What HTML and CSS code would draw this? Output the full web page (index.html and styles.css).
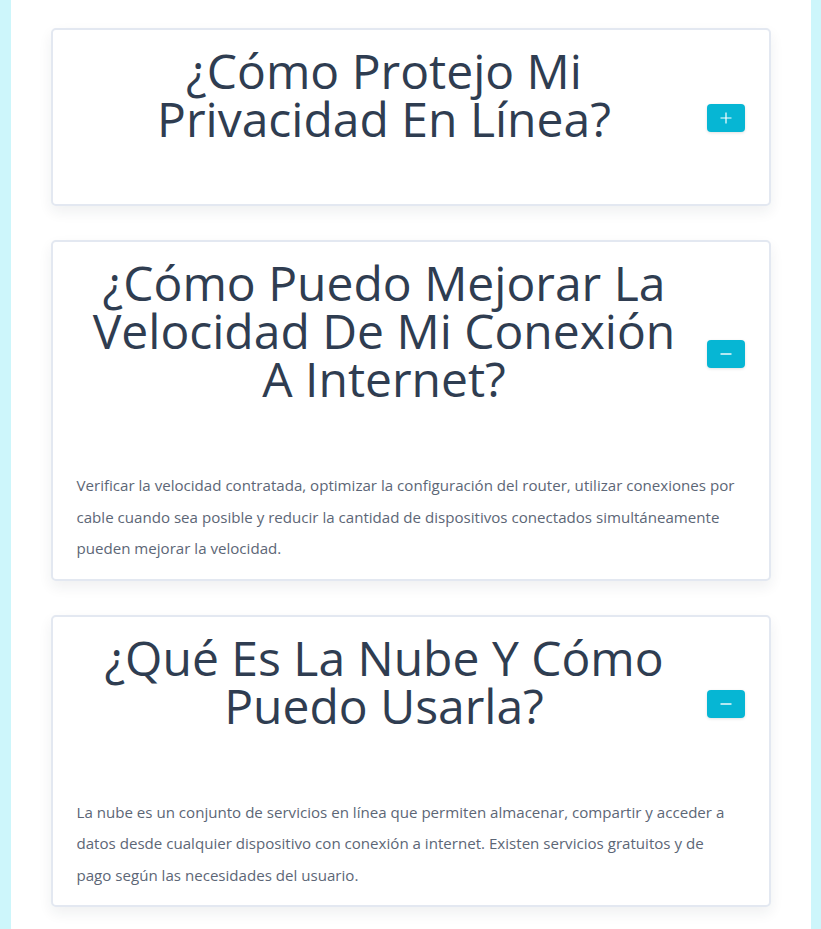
FILE: index.html
```html
<!DOCTYPE html>
<html lang="es">
<head>
<meta charset="utf-8">
<title>Preguntas frecuentes</title>
<link rel="stylesheet" href="styles.css">
</head>
<body>
<main class="container">
  <section class="card">
    <div class="card-head">
      <h2 class="card-title">¿Cómo Protejo Mi Privacidad En Línea?</h2>
      <button class="toggle" aria-label="Abrir">
        <svg width="12" height="12" viewBox="0 0 12 12"><path d="M6 0.5v11M0.5 6h11" stroke="#fff" stroke-width="1.2" fill="none"/></svg>
      </button>
    </div>
  </section>

  <section class="card">
    <div class="card-head">
      <h2 class="card-title">¿Cómo Puedo Mejorar La Velocidad De Mi Conexión A Internet?</h2>
      <button class="toggle" aria-label="Cerrar">
        <svg width="12" height="12" viewBox="0 0 12 12"><path d="M0.5 6h11" stroke="#fff" stroke-width="1.4" fill="none"/></svg>
      </button>
    </div>
    <p class="card-text">Verificar la velocidad contratada, optimizar la configuración del router, utilizar conexiones por cable cuando sea posible y reducir la cantidad de dispositivos conectados simultáneamente pueden mejorar la velocidad.</p>
  </section>

  <section class="card">
    <div class="card-head">
      <h2 class="card-title">¿Qué Es La Nube Y Cómo Puedo Usarla?</h2>
      <button class="toggle" aria-label="Cerrar">
        <svg width="12" height="12" viewBox="0 0 12 12"><path d="M0.5 6h11" stroke="#fff" stroke-width="1.4" fill="none"/></svg>
      </button>
    </div>
    <p class="card-text">La nube es un conjunto de servicios en línea que permiten almacenar, compartir y acceder a datos desde cualquier dispositivo con conexión a internet. Existen servicios gratuitos y de pago según las necesidades del usuario.</p>
  </section>
</main>
</body>
</html>
```
FILE: styles.css
```css
html, body {
  margin: 0;
  padding: 0;
}
body {
  background: #cdf6fb;
  font-family: "Open Sans", "Noto Sans", sans-serif;
}
.container {
  width: 800px;
  margin: 0 auto;
  background: #ffffff;
  padding: 28px 40px 40px;
  box-sizing: border-box;
  display: flex;
  flex-direction: column;
  gap: 34px;
  min-height: 100vh;
}
.card {
  background: #fff;
  border: 2px solid #e3e8f1;
  border-radius: 5px;
  padding: 17px 24px 16px 24px;
  box-shadow: 0 6px 14px rgba(30, 40, 60, 0.07);
}
.card-head {
  display: flex;
  align-items: center;
  gap: 15px;
}
.card-title {
  flex: 1;
  margin: 0 0 45px;
  font-size: 48px;
  line-height: 48px;
  font-weight: 400;
  color: #2f3d51;
  text-align: center;
}
.toggle {
  width: 38px;
  height: 28px;
  border: none;
  border-radius: 4px;
  background: #06b6d4;
  box-shadow: 0 1px 3px rgba(0, 0, 0, 0.12);
  display: flex;
  align-items: center;
  justify-content: center;
  padding: 0;
  cursor: pointer;
}
.card-text {
  margin: 22px 0 -2px;
  max-width: 661px;
  font-size: 15.1px;
  line-height: 31.5px;
  color: #5c6676;
}
```
